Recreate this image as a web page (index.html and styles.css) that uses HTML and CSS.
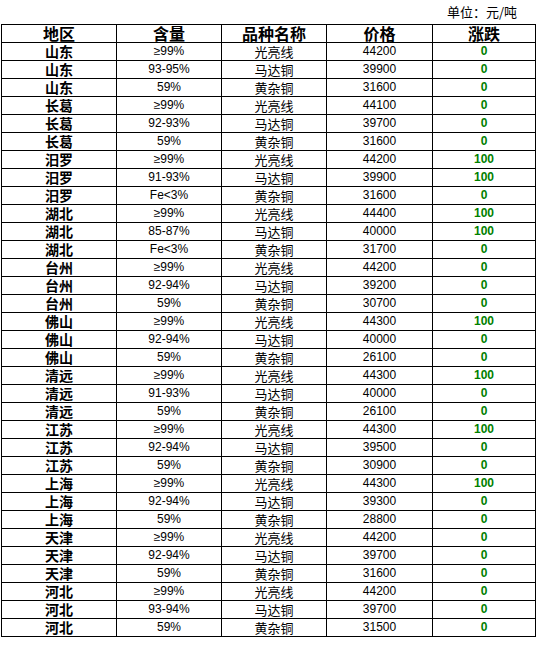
FILE: index.html
```html
<!DOCTYPE html>
<html lang="zh">
<head>
<meta charset="utf-8">
<link rel="stylesheet" href="styles.css">
</head>
<body>
<div class="page">
  <div class="unit">单位：元/吨</div>
  <table class="price">
    <colgroup>
      <col class="c1"><col class="c2"><col class="c3"><col class="c4"><col class="c5">
    </colgroup>
    <thead>
      <tr><th>地区</th><th>含量</th><th>品种名称</th><th>价格</th><th>涨跌</th></tr>
    </thead>
    <tbody>
      <tr><td class="r">山东</td><td>≥99%</td><td class="n">光亮线</td><td>44200</td><td class="g">0</td></tr>
      <tr><td class="r">山东</td><td>93-95%</td><td class="n">马达铜</td><td>39900</td><td class="g">0</td></tr>
      <tr><td class="r">山东</td><td>59%</td><td class="n">黄杂铜</td><td>31600</td><td class="g">0</td></tr>
      <tr><td class="r">长葛</td><td>≥99%</td><td class="n">光亮线</td><td>44100</td><td class="g">0</td></tr>
      <tr><td class="r">长葛</td><td>92-93%</td><td class="n">马达铜</td><td>39700</td><td class="g">0</td></tr>
      <tr><td class="r">长葛</td><td>59%</td><td class="n">黄杂铜</td><td>31600</td><td class="g">0</td></tr>
      <tr><td class="r">汨罗</td><td>≥99%</td><td class="n">光亮线</td><td>44200</td><td class="g">100</td></tr>
      <tr><td class="r">汨罗</td><td>91-93%</td><td class="n">马达铜</td><td>39900</td><td class="g">100</td></tr>
      <tr><td class="r">汨罗</td><td>Fe&lt;3%</td><td class="n">黄杂铜</td><td>31600</td><td class="g">0</td></tr>
      <tr><td class="r">湖北</td><td>≥99%</td><td class="n">光亮线</td><td>44400</td><td class="g">100</td></tr>
      <tr><td class="r">湖北</td><td>85-87%</td><td class="n">马达铜</td><td>40000</td><td class="g">100</td></tr>
      <tr><td class="r">湖北</td><td>Fe&lt;3%</td><td class="n">黄杂铜</td><td>31700</td><td class="g">0</td></tr>
      <tr><td class="r">台州</td><td>≥99%</td><td class="n">光亮线</td><td>44200</td><td class="g">0</td></tr>
      <tr><td class="r">台州</td><td>92-94%</td><td class="n">马达铜</td><td>39200</td><td class="g">0</td></tr>
      <tr><td class="r">台州</td><td>59%</td><td class="n">黄杂铜</td><td>30700</td><td class="g">0</td></tr>
      <tr><td class="r">佛山</td><td>≥99%</td><td class="n">光亮线</td><td>44300</td><td class="g">100</td></tr>
      <tr><td class="r">佛山</td><td>92-94%</td><td class="n">马达铜</td><td>40000</td><td class="g">0</td></tr>
      <tr><td class="r">佛山</td><td>59%</td><td class="n">黄杂铜</td><td>26100</td><td class="g">0</td></tr>
      <tr><td class="r">清远</td><td>≥99%</td><td class="n">光亮线</td><td>44300</td><td class="g">100</td></tr>
      <tr><td class="r">清远</td><td>91-93%</td><td class="n">马达铜</td><td>40000</td><td class="g">0</td></tr>
      <tr><td class="r">清远</td><td>59%</td><td class="n">黄杂铜</td><td>26100</td><td class="g">0</td></tr>
      <tr><td class="r">江苏</td><td>≥99%</td><td class="n">光亮线</td><td>44300</td><td class="g">100</td></tr>
      <tr><td class="r">江苏</td><td>92-94%</td><td class="n">马达铜</td><td>39500</td><td class="g">0</td></tr>
      <tr><td class="r">江苏</td><td>59%</td><td class="n">黄杂铜</td><td>30900</td><td class="g">0</td></tr>
      <tr><td class="r">上海</td><td>≥99%</td><td class="n">光亮线</td><td>44300</td><td class="g">100</td></tr>
      <tr><td class="r">上海</td><td>92-94%</td><td class="n">马达铜</td><td>39300</td><td class="g">0</td></tr>
      <tr><td class="r">上海</td><td>59%</td><td class="n">黄杂铜</td><td>28800</td><td class="g">0</td></tr>
      <tr><td class="r">天津</td><td>≥99%</td><td class="n">光亮线</td><td>44200</td><td class="g">0</td></tr>
      <tr><td class="r">天津</td><td>92-94%</td><td class="n">马达铜</td><td>39700</td><td class="g">0</td></tr>
      <tr><td class="r">天津</td><td>59%</td><td class="n">黄杂铜</td><td>31600</td><td class="g">0</td></tr>
      <tr><td class="r">河北</td><td>≥99%</td><td class="n">光亮线</td><td>44200</td><td class="g">0</td></tr>
      <tr><td class="r">河北</td><td>93-94%</td><td class="n">马达铜</td><td>39700</td><td class="g">0</td></tr>
      <tr><td class="r">河北</td><td>59%</td><td class="n">黄杂铜</td><td>31500</td><td class="g">0</td></tr>
    </tbody>
  </table>
</div>
</body>
</html>
```

FILE: styles.css
```css
html, body {
  margin: 0;
  padding: 0;
  background: #ffffff;
}
.page {
  width: 536px;
  padding-left: 1px;
  box-sizing: border-box;
  font-family: "Liberation Sans", "Noto Sans CJK SC", sans-serif;
  color: #000;
}
.unit {
  height: 24px;
  line-height: 24px;
  font-size: 13px;
  text-align: right;
  padding-right: 19px;
  font-family: "Noto Sans CJK SC", sans-serif;
}
.price {
  border-collapse: collapse;
  table-layout: fixed;
  width: 534px;
}
.c1 { width: 115px; }
.c2 { width: 105px; }
.c3 { width: 105px; }
.c4 { width: 106px; }
.c5 { width: 103px; }
.price th, .price td {
  border: 1px solid #000;
  height: 17px;
  padding: 0;
  text-align: center;
  vertical-align: middle;
  line-height: 17px;
  font-size: 12px;
  overflow: hidden;
  white-space: nowrap;
}
.price th {
  font-size: 16px;
  font-weight: bold;
  font-family: "Noto Sans CJK SC", sans-serif;
  line-height: 17px;
}
.price td.r {
  font-weight: bold;
  font-size: 14px;
  font-family: "Noto Sans CJK SC", sans-serif;
}
.price td.n {
  font-size: 13px;
  font-family: "Noto Sans CJK SC", sans-serif;
}
.price td.g {
  color: #008000;
  font-weight: bold;
  font-size: 12px;
}
```
